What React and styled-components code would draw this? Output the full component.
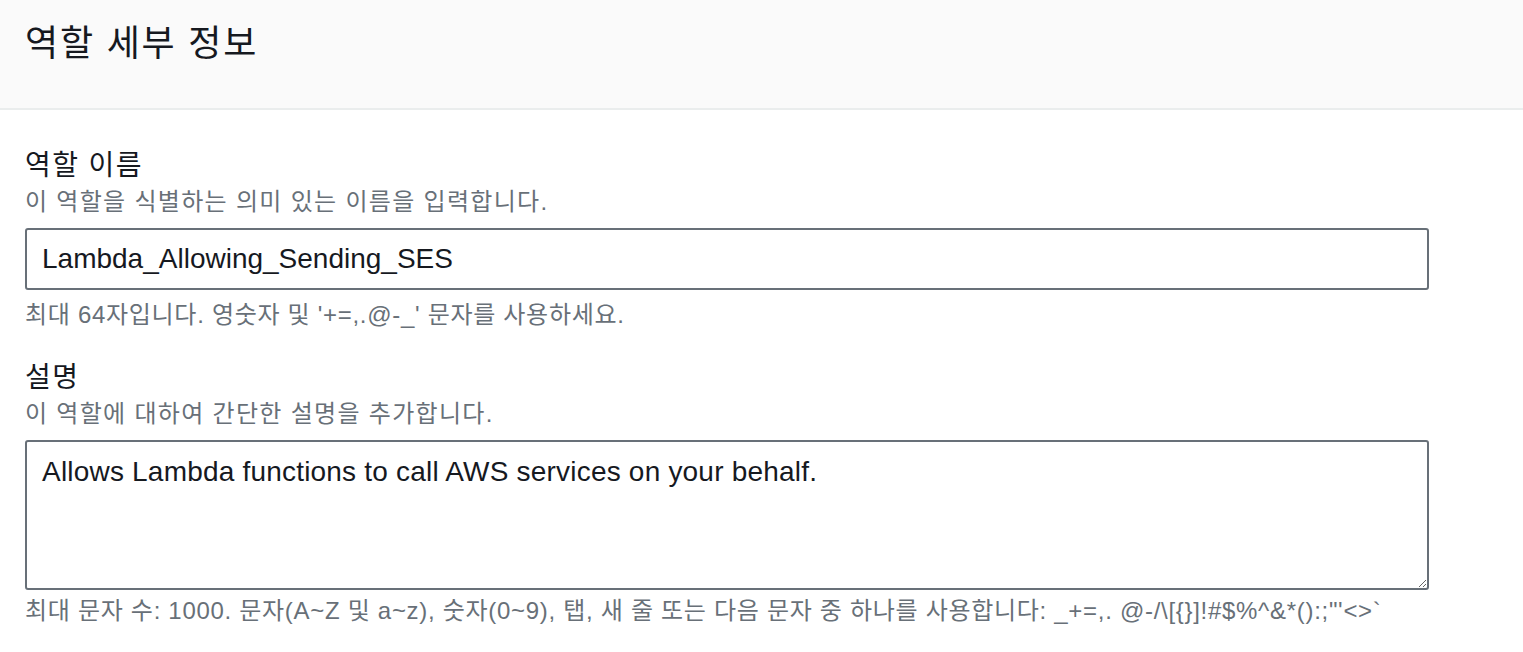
import React from "react";
import styled, { createGlobalStyle } from "styled-components";

const GlobalStyle = createGlobalStyle`
  html, body {
    margin: 0;
    padding: 0;
    background: #ffffff;
  }
  body {
    font-family: "Liberation Sans", "Noto Sans CJK KR", Arial, sans-serif;
    color: #16191f;
  }
`;

const Page = styled.div`
  width: 1523px;
  min-height: 652px;
  background: #ffffff;
`;

const Header = styled.header`
  height: 110px;
  box-sizing: border-box;
  padding: 20px 0 0 25px;
  background: #fafafa;
  border-bottom: 2px solid #eaeded;
`;

const Title = styled.h2`
  margin: 0;
  font-size: 36px;
  line-height: 48px;
  font-weight: 400;
  letter-spacing: 1.8px;
  color: #16191f;
`;

const Body = styled.div`
  width: 1404px;
  padding: 38px 0 0 25px;
  display: flex;
  flex-direction: column;
`;

const Field = styled.div`
  display: flex;
  flex-direction: column;
  margin-bottom: ${(p) => p.$gap || 0}px;
`;

const Label = styled.label`
  font-size: 28px;
  line-height: 36px;
  letter-spacing: 1.4px;
  color: #16191f;
`;

const Description = styled.div`
  margin-top: 2px;
  font-size: 24px;
  line-height: 32px;
  letter-spacing: 1.3px;
  color: #687078;
`;

const Input = styled.input`
  box-sizing: border-box;
  margin-top: 10px;
  width: 100%;
  height: 62px;
  padding: 0 15px;
  border: 2px solid #687078;
  border-radius: 3px;
  background: #ffffff;
  font-family: "Liberation Sans", "Noto Sans CJK KR", Arial, sans-serif;
  font-size: 28px;
  color: #16191f;
  outline: none;
`;

const TextArea = styled.textarea`
  display: block;
  box-sizing: border-box;
  margin-top: 10px;
  width: 100%;
  height: 150px;
  padding: 12px 15px;
  border: 2px solid #687078;
  border-radius: 3px;
  background: #ffffff;
  font-family: "Liberation Sans", "Noto Sans CJK KR", Arial, sans-serif;
  font-size: 28px;
  line-height: 36px;
  letter-spacing: 0.2px;
  color: #16191f;
  resize: vertical;
  outline: none;
`;

const Hint = styled.div`
  margin-top: ${(p) => p.$top}px;
  font-size: 24px;
  line-height: 32px;
  letter-spacing: 0.7px;
  color: #687078;
  white-space: nowrap;
`;

export default function App() {
  return (
    <Page>
      <GlobalStyle />
      <Header>
        <Title>역할 세부 정보</Title>
      </Header>
      <Body>
        <Field $gap={29}>
          <Label>역할 이름</Label>
          <Description>이 역할을 식별하는 의미 있는 이름을 입력합니다.</Description>
          <Input defaultValue="Lambda_Allowing_Sending_SES" />
          <Hint $top={9}>최대 64자입니다. 영숫자 및 '+=,.@-_' 문자를 사용하세요.</Hint>
        </Field>
        <Field>
          <Label>설명</Label>
          <Description>이 역할에 대하여 간단한 설명을 추가합니다.</Description>
          <TextArea defaultValue="Allows Lambda functions to call AWS services on your behalf." />
          <Hint $top={5}>
            최대 문자 수: 1000. 문자(A~Z 및 a~z), 숫자(0~9), 탭, 새 줄 또는 다음 문자 중 하나를 사용합니다: _+=,. @-/\[{"{}"}]!#$%^&amp;*():;"'&lt;&gt;`
          </Hint>
        </Field>
      </Body>
    </Page>
  );
}
